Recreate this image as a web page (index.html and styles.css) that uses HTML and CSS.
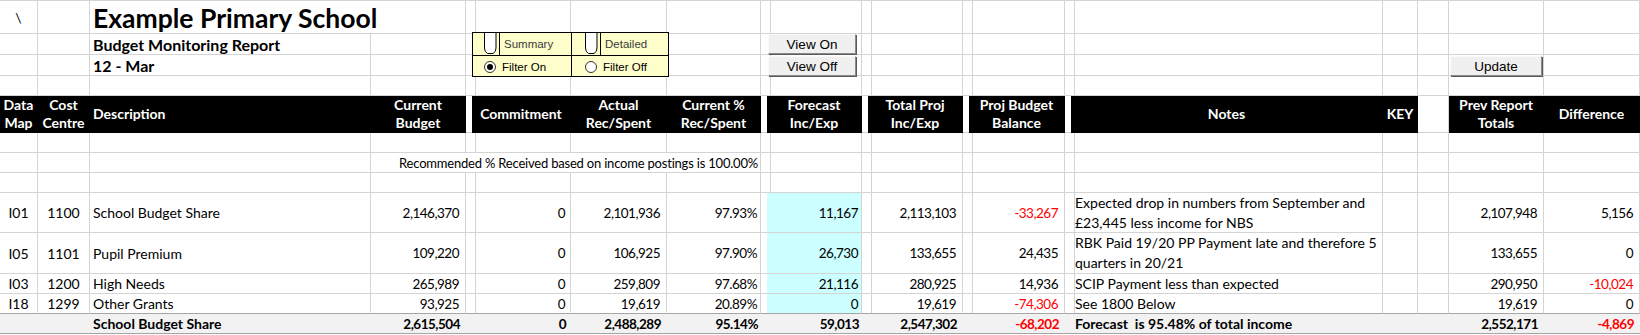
FILE: index.html
```html
<!DOCTYPE html>
<html>
<head>
<meta charset="utf-8">
<link rel="stylesheet" href="styles.css">
</head>
<body>
<div class="sheet">
  <div class="grid">
    <!-- row 1 -->
    <div class="c m">\</div><div class="c"></div><div class="c span2 title">Example Primary School</div><div class="c sp"></div><div class="c"></div><div class="c"></div><div class="c"></div><div class="c sp"></div><div class="c"></div><div class="c sp"></div><div class="c"></div><div class="c sp"></div><div class="c"></div><div class="c sp"></div><div class="c"></div><div class="c"></div><div class="c"></div><div class="c"></div><div class="c"></div>
    <!-- row 2 -->
    <div class="c"></div><div class="c"></div><div class="c l sub">Budget Monitoring Report</div><div class="c"></div><div class="c sp"></div><div class="c"></div><div class="c"></div><div class="c"></div><div class="c sp"></div><div class="c"></div><div class="c sp"></div><div class="c"></div><div class="c sp"></div><div class="c"></div><div class="c sp"></div><div class="c"></div><div class="c"></div><div class="c"></div><div class="c"></div><div class="c"></div>
    <!-- row 3 -->
    <div class="c"></div><div class="c"></div><div class="c l sub">12 - Mar</div><div class="c"></div><div class="c sp"></div><div class="c"></div><div class="c"></div><div class="c"></div><div class="c sp"></div><div class="c"></div><div class="c sp"></div><div class="c"></div><div class="c sp"></div><div class="c"></div><div class="c sp"></div><div class="c"></div><div class="c"></div><div class="c"></div><div class="c"></div><div class="c"></div>
    <!-- row 4 -->
    <div class="c"></div><div class="c"></div><div class="c"></div><div class="c"></div><div class="c sp"></div><div class="c"></div><div class="c"></div><div class="c"></div><div class="c sp"></div><div class="c"></div><div class="c sp"></div><div class="c"></div><div class="c sp"></div><div class="c"></div><div class="c sp"></div><div class="c"></div><div class="c"></div><div class="c"></div><div class="c"></div><div class="c"></div>
    <!-- header -->
    <div class="c hd m"><span>Data<br>Map</span></div>
    <div class="c hd m"><span>Cost<br>Centre</span></div>
    <div class="c hd l"><span>Description</span></div>
    <div class="c hd m"><span>Current<br>Budget</span></div>
    <div class="c sp"></div>
    <div class="c hd m"><span>Commitment</span></div>
    <div class="c hd m"><span>Actual<br>Rec/Spent</span></div>
    <div class="c hd m"><span>Current %<br>Rec/Spent</span></div>
    <div class="c sp"></div>
    <div class="c hd m"><span>Forecast<br>Inc/Exp</span></div>
    <div class="c sp"></div>
    <div class="c hd m"><span>Total Proj<br>Inc/Exp</span></div>
    <div class="c sp"></div>
    <div class="c hd m"><span>Proj Budget<br>Balance</span></div>
    <div class="c sp"></div>
    <div class="c hd m"><span>Notes</span></div>
    <div class="c hd m"><span>KEY</span></div>
    <div class="c"></div>
    <div class="c hd m"><span>Prev Report<br>Totals</span></div>
    <div class="c hd m"><span>Difference</span></div>
    <!-- row 6 -->
    <div class="c"></div><div class="c"></div><div class="c"></div><div class="c"></div><div class="c sp"></div><div class="c"></div><div class="c"></div><div class="c"></div><div class="c sp"></div><div class="c"></div><div class="c sp"></div><div class="c"></div><div class="c sp"></div><div class="c"></div><div class="c sp"></div><div class="c"></div><div class="c"></div><div class="c"></div><div class="c"></div><div class="c"></div>
    <!-- row 7 -->
    <div class="c"></div><div class="c"></div><div class="c"></div><div class="c span5 r rec">Recommended % Received based on income postings is 100.00%</div><div class="c sp"></div><div class="c"></div><div class="c sp"></div><div class="c"></div><div class="c sp"></div><div class="c"></div><div class="c sp"></div><div class="c"></div><div class="c"></div><div class="c"></div><div class="c"></div><div class="c"></div>
    <!-- row 8 -->
    <div class="c"></div><div class="c"></div><div class="c"></div><div class="c"></div><div class="c sp"></div><div class="c"></div><div class="c"></div><div class="c"></div><div class="c sp"></div><div class="c"></div><div class="c sp"></div><div class="c"></div><div class="c sp"></div><div class="c"></div><div class="c sp"></div><div class="c"></div><div class="c"></div><div class="c"></div><div class="c"></div><div class="c"></div>
    <!-- I01 -->
    <div class="c m">I01</div><div class="c m">1100</div><div class="c l">School Budget Share</div><div class="c r">2,146,370</div><div class="c sp"></div><div class="c r e">0</div><div class="c r">2,101,936</div><div class="c r g">97.93%</div><div class="c sp"></div><div class="c r g fc">11,167</div><div class="c sp"></div><div class="c r">2,113,103</div><div class="c sp"></div><div class="c r neg">-33,267</div><div class="c sp"></div><div class="c note"><span>Expected drop in numbers from September and<br>£23,445 less income for NBS</span></div><div class="c"></div><div class="c"></div><div class="c r">2,107,948</div><div class="c r">5,156</div>
    <!-- I05 -->
    <div class="c m">I05</div><div class="c m">1101</div><div class="c l">Pupil Premium</div><div class="c r">109,220</div><div class="c sp"></div><div class="c r e">0</div><div class="c r">106,925</div><div class="c r g">97.90%</div><div class="c sp"></div><div class="c r g fc">26,730</div><div class="c sp"></div><div class="c r">133,655</div><div class="c sp"></div><div class="c r">24,435</div><div class="c sp"></div><div class="c note"><span>RBK Paid 19/20 PP Payment late and therefore 5<br>quarters in 20/21</span></div><div class="c"></div><div class="c"></div><div class="c r">133,655</div><div class="c r">0</div>
    <!-- I03 -->
    <div class="c m">I03</div><div class="c m">1200</div><div class="c l">High Needs</div><div class="c r">265,989</div><div class="c sp"></div><div class="c r e">0</div><div class="c r">259,809</div><div class="c r g">97.68%</div><div class="c sp"></div><div class="c r g fc">21,116</div><div class="c sp"></div><div class="c r">280,925</div><div class="c sp"></div><div class="c r">14,936</div><div class="c sp"></div><div class="c note">SCIP Payment less than expected</div><div class="c"></div><div class="c"></div><div class="c r">290,950</div><div class="c r neg">-10,024</div>
    <!-- I18 -->
    <div class="c m last">I18</div><div class="c m last">1299</div><div class="c l last">Other Grants</div><div class="c r last">93,925</div><div class="c sp last"></div><div class="c r e last">0</div><div class="c r last">19,619</div><div class="c r g last">20.89%</div><div class="c sp last"></div><div class="c r g fc last">0</div><div class="c sp last"></div><div class="c r last">19,619</div><div class="c sp last"></div><div class="c r neg last">-74,306</div><div class="c sp last"></div><div class="c note last">See 1800 Below</div><div class="c last"></div><div class="c last"></div><div class="c r last">19,619</div><div class="c r last">0</div>
    <!-- total -->
    <div class="c tot"></div><div class="c tot"></div><div class="c tot l b">School Budget Share</div><div class="c tot r b">2,615,504</div><div class="c tot"></div><div class="c tot r e b">0</div><div class="c tot r b">2,488,289</div><div class="c tot r g b">95.14%</div><div class="c tot"></div><div class="c tot r g b">59,013</div><div class="c tot"></div><div class="c tot r b">2,547,302</div><div class="c tot"></div><div class="c tot r b neg">-68,202</div><div class="c tot"></div><div class="c tot note b">Forecast&nbsp; is 95.48% of total income</div><div class="c tot"></div><div class="c tot"></div><div class="c tot r b">2,552,171</div><div class="c tot r b neg">-4,869</div>
  </div>

  <div class="filter">
    <div class="fcell ftop">
      <svg class="notch" width="19" height="22" viewBox="0 0 19 22"><path d="M1.5 0 V15 Q1.5 19 4.5 20.5 H10 Q13 19 13 15 V0" fill="#fff" stroke="#000" stroke-width="1"/><line x1="16.5" y1="0" x2="16.5" y2="22" stroke="#000" stroke-width="1"/></svg>
      <span class="flab">Summary</span>
    </div>
    <div class="fcell ftop second">
      <svg class="notch" width="19" height="22" viewBox="0 0 19 22"><path d="M1.5 0 V15 Q1.5 19 4.5 20.5 H10 Q13 19 13 15 V0" fill="#fff" stroke="#000" stroke-width="1"/><line x1="16.5" y1="0" x2="16.5" y2="22" stroke="#000" stroke-width="1"/></svg>
      <span class="flab">Detailed</span>
    </div>
    <div class="fcell fbot">
      <span class="radio on"></span><span class="olab">Filter On</span>
    </div>
    <div class="fcell fbot second">
      <span class="radio"></span><span class="olab">Filter Off</span>
    </div>
  </div>

  <div class="btn view-on">View On</div>
  <div class="btn view-off">View Off</div>
  <div class="btn update">Update</div>
</div>
</body>
</html>
```

FILE: styles.css
```css
* { box-sizing: border-box; }
html, body { margin: 0; padding: 0; background: #fff; }
body {
  width: 1640px;
  height: 335px;
  overflow: hidden;
  font-family: Lato, "Liberation Sans", sans-serif;
  font-size: 14px;
  color: #000;
}
.sheet { position: relative; width: 1640px; }
.grid {
  display: grid;
  grid-template-columns: 38px 52px 281px 95px 6px 99px 96px 94px 6px 95px 6px 95px 6px 96px 6px 312px 35px 31px 95px 96px;
  grid-template-rows: 33px 21px 21px 20px 37px 20px 20px 20px 40px 41px 20px 20px 20px;
  border-top: 1px solid #d4d4d4;
}
.c {
  border-right: 1px solid #d4d4d4;
  border-bottom: 1px solid #d4d4d4;
  display: flex;
  align-items: center;
  white-space: nowrap;
  min-width: 0;
  padding: 0 6px 0 3px;
}
.span2 { grid-column: span 2; }
.span5 { grid-column: span 5; }
.m { justify-content: center; padding: 0; text-align: center; }
.l { justify-content: flex-start; padding-left: 3px; }
.r {
  justify-content: flex-end;
  padding-right: 6px;
  font-size: 13.5px;
  letter-spacing: -0.5px;
}
.r.e { padding-right: 5px; }
.r.g { padding-right: 3px; }
.rec {
  padding-right: 2px;
  font-size: 13px;
  letter-spacing: -0.2px;
}
.b { font-weight: 700; }
.sub { font-size: 16px; font-weight: 700; }
.title { font-size: 26.5px; font-weight: 700; padding-left: 3px; padding-top: 1px; }
.hd {
  background: #000;
  color: #fff;
  font-weight: 700;
  line-height: 18px;
  border-color: #000;
}
.hd.l { padding-left: 3px; }
.fc { background: #ccffff; }
.neg { color: #ff0000; }
.note { padding-left: 4px; line-height: 20px; }
.last { border-bottom-color: #a6a6a6; }
.tot {
  background: #f2f2f2;
  border-right: none;
  border-bottom-color: #a6a6a6;
}

/* floating form controls */
.filter {
  position: absolute;
  left: 472px;
  top: 32px;
  width: 197px;
  height: 45px;
  border: 1px solid #000;
  background: #ffffcc;
  display: grid;
  grid-template-columns: 99px 1fr;
  grid-template-rows: 23px 1fr;
  font-family: "Liberation Sans", Arial, sans-serif;
  font-size: 11.5px;
}
.fcell { display: flex; align-items: center; }
.ftop { border-bottom: 1px solid #000; padding-left: 10px; align-items: flex-start; }
.ftop:first-child, .fbot:nth-child(3) { border-right: 1px solid #000; }
.ftop.second { padding-left: 12px; }
.notch { display: block; flex: none; }
.flab { color: #3a3a3a; margin-left: 2px; line-height: 22px; }
.fbot { padding-left: 11px; padding-top: 2px; }
.fbot.second { padding-left: 13px; }
.olab { margin-left: 6px; color: #000; }
.radio {
  width: 12px;
  height: 12px;
  border-radius: 50%;
  border: 1px solid #333;
  background: #fff;
  flex: none;
  display: flex;
  align-items: center;
  justify-content: center;
}
.radio.on::after {
  content: "";
  width: 6px;
  height: 6px;
  border-radius: 50%;
  background: #000;
}
.btn {
  position: absolute;
  background: #f0f0f0;
  border: 1px solid;
  border-color: #fafafa #8a8a8a #8a8a8a #fafafa;
  box-shadow: 1px 1px 0 #5a5a5a;
  font-family: "Liberation Sans", Arial, sans-serif;
  font-size: 13.5px;
  display: flex;
  align-items: center;
  justify-content: center;
  color: #000;
}
.view-on { left: 768px; top: 34px; width: 88px; height: 20px; }
.view-off { left: 768px; top: 56px; width: 88px; height: 20px; }
.update { left: 1450px; top: 56px; width: 92px; height: 20px; }
```
